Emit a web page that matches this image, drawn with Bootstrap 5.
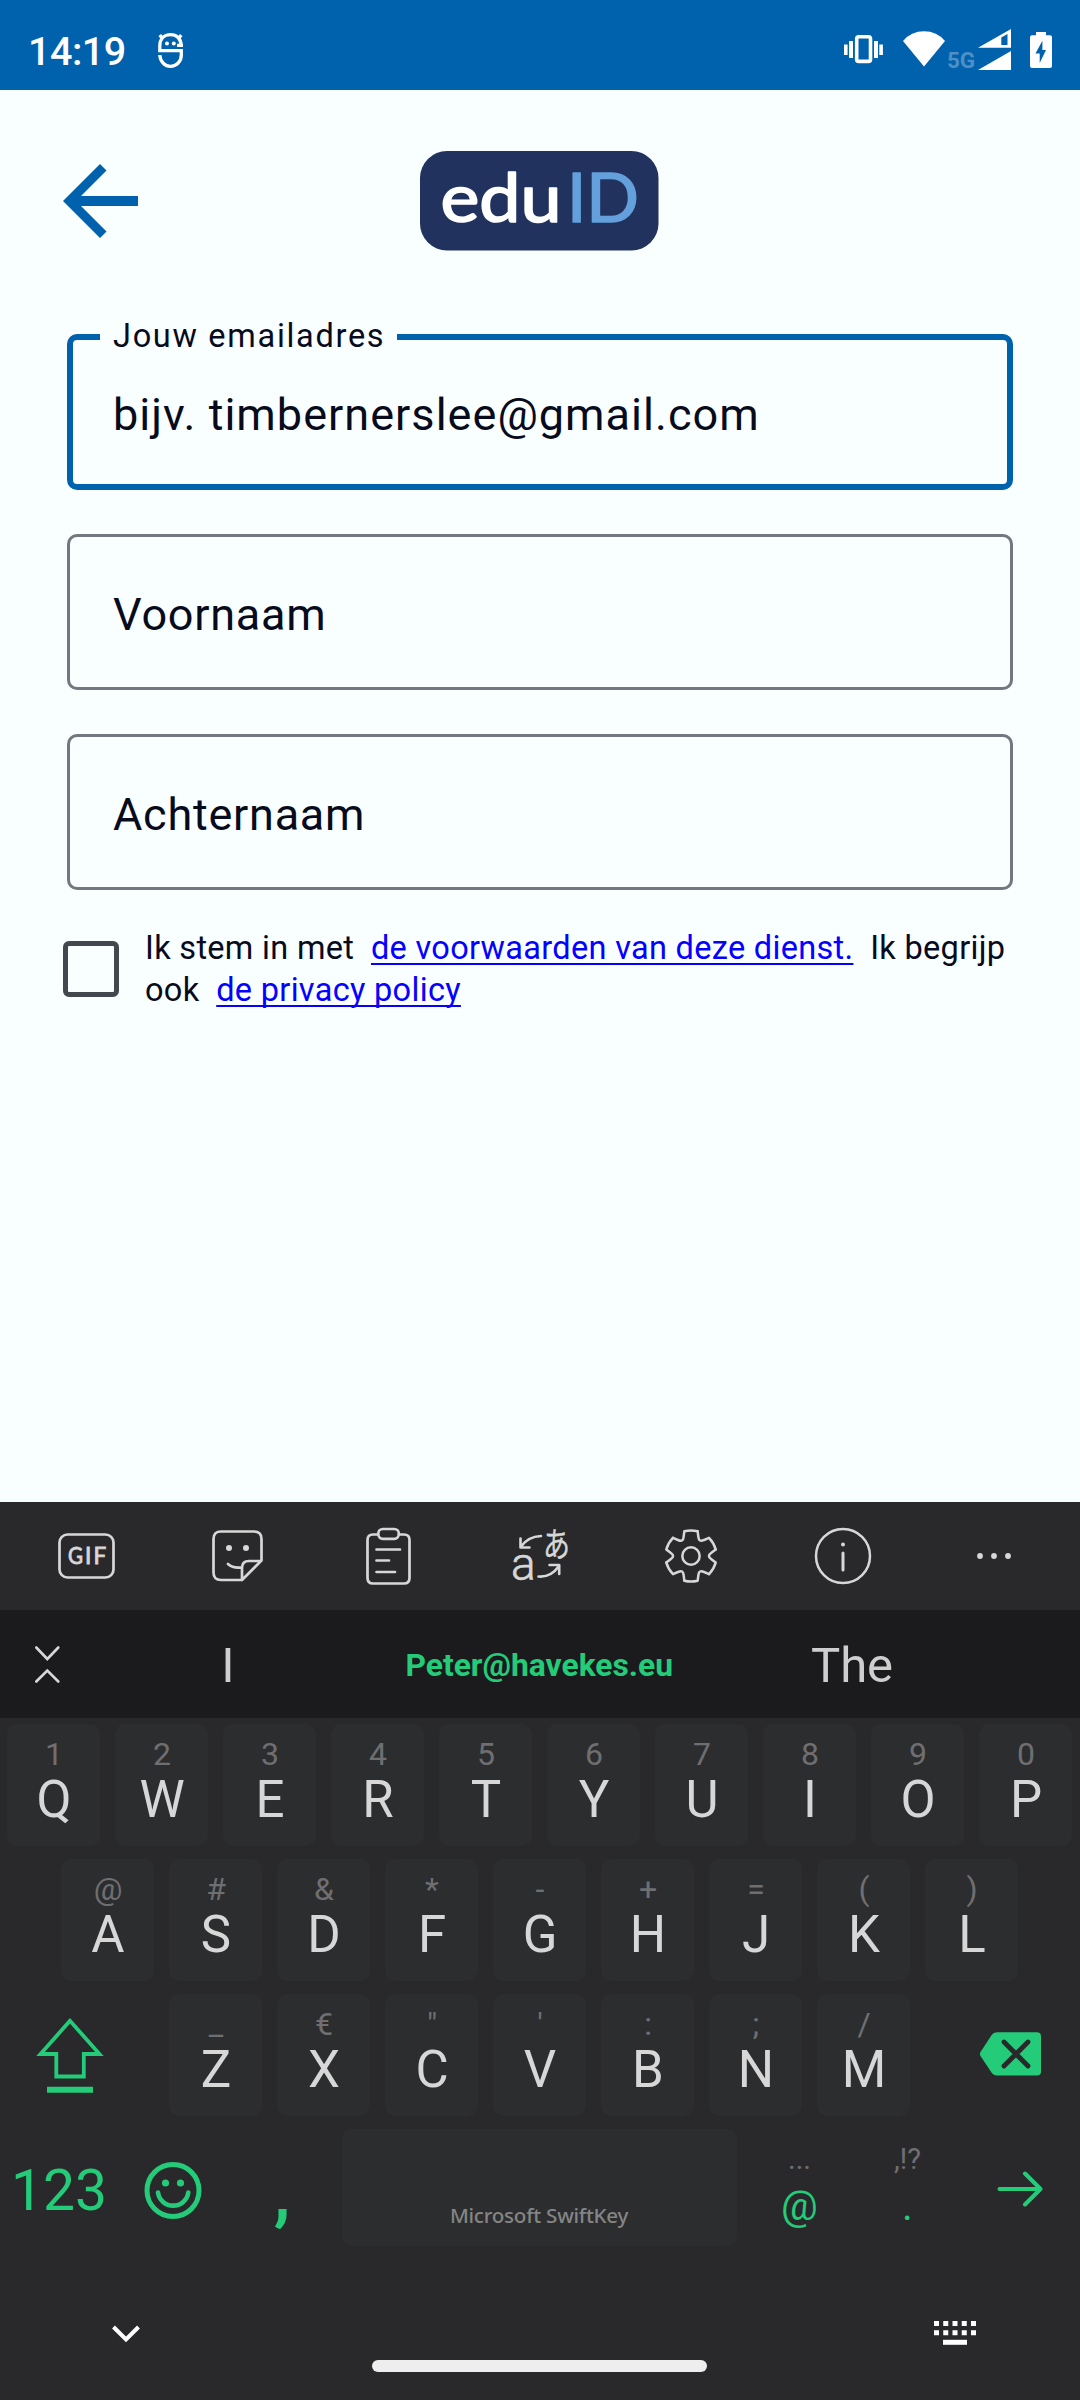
<!DOCTYPE html>
<html lang="nl">
<head>
<meta charset="utf-8">
<meta name="viewport" content="width=device-width, initial-scale=1">
<title>eduID</title>
<link href="https://cdn.jsdelivr.net/npm/bootstrap@5.3.0/dist/css/bootstrap.min.css" rel="stylesheet">
<style>
  body { width: 1080px; height: 2400px; overflow: hidden; background: #f9feff; color: #070b1c; font-family: Roboto, "Liberation Sans", sans-serif; }
  svg { display: block; overflow: visible; flex: none; }
  .statusbar { height: 90px; background: #0061ad; padding: 9px 28px 0 28px; color: #fff; }
  .clock { font-size: 39.5px; font-weight: 500; line-height: 86px; letter-spacing: -.5px; width: 130px; }
  .topbar { height: 200px; padding: 61px 63px 0; }
  .page-form { height: 1212px; padding: 44px 67px 0; }
  .outlined { height: 156px; margin-bottom: 44px; }
  .outlined .form-control { height: 156px; border: 3px solid #74777f; border-radius: 10px; background: transparent; color: #070b1c; font-size: 45px; letter-spacing: .75px; padding: 5px 43px 0; box-shadow: none; }
  .outlined .form-control::placeholder { color: #070b1c; opacity: 1; }
  .outlined.active-field .form-control { border: 6px solid #0061ad; padding: 5px 40px 0; letter-spacing: 1.03px; }
  .outlined label { left: 33px; top: -18px; height: 40px; line-height: 40px; padding: 0 12px 0 13px; width: 297px; background: #f9feff; font-size: 32.5px; letter-spacing: 1.7px; white-space: nowrap; }
  .terms { margin: -7px 0 0 -4px; font-size: 32.5px; line-height: 42px; letter-spacing: .31px; }
  .terms .form-check-input { width: 56px; height: 56px; margin: 14px 26px 0 0; border: 5px solid #44474e; border-radius: 6px; background: transparent; flex: none; }
  .terms a { color: #0500ff; text-decoration-thickness: 2px; text-underline-offset: 4px; text-decoration-skip-ink: none; }
  .keyboard { height: 898px; background: #29292b; color: #d7d7d7; }
  .tools { height: 108px; padding: 0 10.5px; }
  .predictions { height: 108px; background: #1b1b1d; padding-right: 72px; }
  .predictions .toggle-cell { width: 72px; padding-left: 35px; }
  .guess { font-size: 49px; line-height: 105px; padding-top: 3px; width: 312px; color: #cecece; }
  .guess-main { font-size: 31.8px; font-weight: 700; padding: 3px 1.5px 0 0; color: #24cb79; width: 312px; }
  .keyrow { height: 135px; padding-top: 6px; }
  .keycell { width: 108px; padding: 0 8px 0 7px; }
  .keycap { height: 122px; border-radius: 10px; background: #2c2d2f; padding: 14px 0 0 1px; }
  .hint { font-size: 32px; line-height: 32px; height: 32px; color: #6f6f71; }
  .letter { font-size: 51px; line-height: 51px; margin-top: 4px; }
  .side { width: 162px; }
  .green { color: #24cb79; }
  .lastrow { height: 124px; padding-top: 6px; }
  .num { width: 118px; font-size: 57px; line-height: 124px; margin-right: 1px; }
  .comma-key { width: 108px; font-size: 68px; font-weight: 700; line-height: 68px; padding: 31px 0 0 2px; }
  .space-key { width: 395px; height: 117px; margin: 0 8px 0 7px; border-radius: 10px; background: #2c2d2f; font-family: "Noto Sans", "Open Sans", sans-serif; font-weight: 500; font-size: 20.6px; letter-spacing: -.25px; line-height: 30px; color: #858585; padding: 0 1px 16px 0; }
  .punct { width: 108px; padding: 12px 0 0 1px; }
  .punct .hint { font-size: 29px; height: 36px; line-height: 36px; }
  .punct .sign { font-size: 41px; line-height: 48px; margin-top: 5px; }
  .navarea { height: 153px; padding: 74px 104px 0 112px; }
  .homebar { width: 335px; height: 12px; border-radius: 6px; background: #eee; margin: 39px 0 0 232px; }
</style>
</head>
<body>
<header class="statusbar d-flex justify-content-between">
  <div class="d-flex">
    <span class="clock">14:19</span>
    <svg class="mt-3" width="26" height="38" viewBox="158 25 26 38" fill="none" stroke="#fff" stroke-width="3.3">
      <path d="M181.3 45C180.3 38 176 34.7 170.5 34.7C164 34.7 159.8 39 159.8 46V50.6H181.3V55C181.3 62 176 66.3 170.5 66.3C165 66.3 160.2 62 159.8 55M177 45.3H183M162 38L159.8 35M179 38L181.2 35"/>
      <g fill="#fff" stroke="none"><circle cx="167" cy="43.4" r="2"/><circle cx="173.8" cy="43.4" r="2"/></g>
    </svg>
  </div>
  <svg width="208" height="70" viewBox="844 9 208 70" fill="#fff">
    <rect x="856.7" y="36.8" width="13.8" height="24.6" rx="2" fill="none" stroke="#fff" stroke-width="3.6"/>
    <path d="M849 41h4v17h-4zM844 44.500h3.600v10.500h-3.600zM874 41h4v17h-4zM879.300 44.500h3.600v10.500h-3.600z"/>
    <path d="M903 41Q911 31.300 924 31.300T945 41L924 66.500Z"/>
    <text x="947" y="68" font-size="22.500" font-weight="700" fill="#4d90c6" textLength="28">5G</text>
    <path fill-rule="evenodd" d="M978 47.700L1011 29V47.700ZM1001.300 37.500L1007.500 34V45H1001.300ZM978 70L1011 51V70Z"/>
    <path fill-rule="evenodd" d="M1036 32h10v3.300h4q2 0 2 2v28.700q0 2-2 2h-18q-2 0-2-2V37.300q0-2 2-2h4zM1042.400 40.700L1035.500 53.500H1039.700V63L1046 50H1042.400Z"/>
  </svg>
</header>

<div class="topbar d-flex">
  <svg width="357" height="100" viewBox="63 151 357 100" fill="#0061ad"><path d="M63 201L100 164L106.500 170.500L81 196H138V206H81L106.500 231.500L100 238Z"/></svg>
  <svg width="239" height="100" viewBox="0 0 239 100" font-family="Lato">
    <rect width="238.500" height="99.500" rx="27" fill="#22325f"/>
    <g font-size="67" font-weight="400" stroke-linejoin="round" stroke-width="1.700">
      <text x="20.500" y="70.500" fill="#fff" stroke="#fff" textLength="121" lengthAdjust="spacingAndGlyphs">edu</text>
      <text x="147" y="70.500" fill="#63a0dc" stroke="#63a0dc" textLength="72" lengthAdjust="spacingAndGlyphs">ID</text>
    </g>
  </svg>
</div>

<main class="page-form">
  <div class="outlined active-field position-relative">
    <input id="email" class="form-control" type="text" placeholder="bijv. timbernerslee@gmail.com">
    <label for="email" class="position-absolute">Jouw emailadres</label>
  </div>
  <div class="outlined"><input class="form-control" type="text" placeholder="Voornaam"></div>
  <div class="outlined"><input class="form-control" type="text" placeholder="Achternaam"></div>
  <div class="terms d-flex">
    <input class="form-check-input" type="checkbox">
    <div class="text-nowrap">Ik stem in met&nbsp; <a href="#">de voorwaarden van deze dienst.</a>&nbsp; Ik begrijp<br>ook&nbsp; <a href="#">de privacy policy</a></div>
  </div>
</main>

<section class="keyboard">
  <div class="tools d-flex align-items-center">
    <div class="col d-flex justify-content-center">
      <svg width="57" height="46" viewBox="0 0 57 46" fill="none" stroke="#d7d7d7" stroke-width="2.700"><rect x="1.500" y="1.500" width="54" height="43" rx="8"/><text x="10" y="31" font-family="Lato" font-size="22.500" fill="#d7d7d7" stroke-width=".9"><tspan textLength="15" lengthAdjust="spacingAndGlyphs">G</tspan><tspan x="27">I</tspan><tspan x="35.500">F</tspan></text></svg>
    </div>
    <div class="col d-flex justify-content-center">
      <svg width="51" height="52" viewBox="0 0 51 52" fill="none" stroke="#d7d7d7" stroke-width="2.700" stroke-linejoin="round" stroke-linecap="round"><path d="M30 50H9Q1.500 50 1.500 42.500V9Q1.500 1.500 9 1.500H42Q49.500 1.500 49.500 9V30.500L30 50V38Q30 31 37 31H49M16 34Q21 38.500 29 37.500"/><g fill="#d7d7d7" stroke="none"><circle cx="17" cy="18" r="3"/><circle cx="34" cy="18" r="3"/></g></svg>
    </div>
    <div class="col d-flex justify-content-center">
      <svg width="45" height="58" viewBox="0 0 45 58" fill="none" stroke="#d7d7d7" stroke-width="2.700" stroke-linecap="round"><path d="M12 7.500H7Q1.500 7.500 1.500 13V51Q1.500 56.500 7 56.500H38Q43.500 56.500 43.500 51V13Q43.500 7.500 38 7.500H33M10.500 22.500H34M10.500 33.500H23M10.500 45H29"/><rect x="12.300" y="2" width="20.500" height="9.800" rx="4.500"/></svg>
    </div>
    <div class="col d-flex justify-content-center">
      <svg width="56" height="56" viewBox="513 1528 56 56" fill="none" stroke="#d7d7d7" stroke-width="2.600" stroke-linecap="round" stroke-linejoin="round">
        <path d="M542 1536Q529 1536.500 521.500 1547M521.500 1538.500V1547.500H530.500M539.500 1576.500Q552 1577.500 560 1566M550.500 1565H560.200V1574"/>
        <text x="512" y="1580.300" font-family="Roboto" font-weight="300" font-size="46" fill="#d7d7d7" stroke-width=".6">a</text>
        <text transform="translate(544 1557) scale(.9 1.150)" font-family="'Noto Sans CJK JP'" font-size="30" fill="#d7d7d7" stroke-width=".3">あ</text>
      </svg>
    </div>
    <div class="col d-flex justify-content-center">
      <svg width="52" height="54" viewBox="-78 -81 156 162" fill="none" stroke="#d7d7d7" stroke-width="7.500" stroke-linejoin="round" stroke-linecap="round">
        <defs><path id="tooth" d="M20-74Q0-79-20-74L-22-58C-23-46-28.300-42.900-39.200-48L-54.100-54.300"/></defs>
        <use href="#tooth"/><use href="#tooth" transform="rotate(60)"/><use href="#tooth" transform="rotate(120)"/><use href="#tooth" transform="rotate(180)"/><use href="#tooth" transform="rotate(240)"/><use href="#tooth" transform="rotate(300)"/>
        <circle r="26"/>
      </svg>
    </div>
    <div class="col d-flex justify-content-center">
      <svg width="58" height="58" viewBox="0 0 58 58" fill="none" stroke="#d7d7d7" stroke-width="2.500" stroke-linecap="round"><circle cx="29" cy="29" r="27"/><path d="M29 26V43" stroke-width="3"/><circle cx="29" cy="17.500" r="2" fill="#d7d7d7" stroke="none"/></svg>
    </div>
    <div class="col d-flex justify-content-center">
      <svg width="34" height="6" viewBox="0 0 34 6" fill="#d7d7d7"><circle cx="3" cy="3" r="2.900"/><circle cx="17" cy="3" r="2.900"/><circle cx="31" cy="3" r="2.900"/></svg>
    </div>
  </div>

  <div class="predictions d-flex align-items-center text-center">
    <div class="toggle-cell"><svg width="25" height="37" viewBox="0 0 25 37" fill="none" stroke="#d7d7d7" stroke-width="2.600" stroke-linecap="round"><path d="M1.300 1.500L12.300 13L23.300 1.500M1.300 35.500L12.300 24.500L23.300 35.500"/></svg></div>
    <div class="guess">I</div>
    <div class="guess-main">Peter@havekes.eu</div>
    <div class="guess">The</div>
  </div>

  <div id="row1" class="keyrow d-flex text-center"></div>
  <div id="row2" class="keyrow d-flex justify-content-center text-center"></div>
  <div class="keyrow d-flex text-center">
    <div class="side"><svg width="108" height="122" viewBox="0 1994 108 122" fill="none" stroke="#24cb79" stroke-width="3.800"><path d="M70 2020.800L40.500 2054H56.300V2076.500H83.800V2054H99.500Z"/><path d="M47 2089.700H93" stroke-width="6"/></svg></div>
    <div id="row3" class="d-flex"></div>
    <div class="side"><svg width="162" height="122" viewBox="918 1994 162 122"><path fill="#24cb79" d="M997 2032.300H1037Q1041 2032.300 1041 2036.300V2071.500Q1041 2075.500 1037 2075.500H997Q993.500 2075.500 991.500 2072.500L980.500 2056Q979.300 2054 980.500 2052L991.500 2035.300Q993.500 2032.300 997 2032.300Z"/><path d="M1004 2042L1028 2066M1028 2042L1004 2066" stroke="#29292b" stroke-width="4.800" stroke-linecap="round"/></svg></div>
  </div>
  <div class="lastrow d-flex text-center green">
    <div class="num">123</div>
    <svg width="108" height="118" viewBox="119 2129 108 118" fill="none" stroke="#24cb79" stroke-width="5" stroke-linecap="round"><circle cx="173" cy="2190.500" r="26"/><path d="M158 2192.500A15.300 15.300 0 0 0 188.300 2192.500" stroke-width="4.600"/><g fill="#24cb79" stroke="none"><circle cx="165.500" cy="2183" r="3.600"/><circle cx="180.500" cy="2183" r="3.600"/></g></svg>
    <div class="comma-key">,</div>
    <div class="space-key d-flex align-items-end justify-content-center">Microsoft SwiftKey</div>
    <div class="punct"><div class="hint">...</div><div class="sign">@</div></div>
    <div class="punct"><div class="hint">,!?</div><div class="sign">.</div></div>
    <svg width="119" height="118" viewBox="961 2129 119 118" fill="none" stroke="#24cb79" stroke-width="4" stroke-linecap="round" stroke-linejoin="round"><path d="M999.500 2189H1040.500M1025 2173.500L1040.500 2189L1025 2204.500"/></svg>
  </div>
  <div class="navarea d-flex align-items-start">
    <svg width="28" height="26" viewBox="0 0 28 26" fill="none" stroke="#fff" stroke-width="4"><path d="M1.500 6L14 18.500L26.500 6"/></svg>
    <div class="homebar"></div>
    <svg class="ms-auto" width="42" height="24" viewBox="0 0 42 24" fill="none" stroke="#fff" stroke-width="5"><path d="M0 2.500H42M0 11.800H42" stroke-dasharray="5 4.250"/><path d="M9 21.300H33"/></svg>
  </div>
</section>

<script src="https://cdn.jsdelivr.net/npm/bootstrap@5.3.0/dist/js/bootstrap.bundle.min.js"></script>
<script>
  const rows = {
    row1: ['QWERTYUIOP', '1234567890'],
    row2: ['ASDFGHJKL', '@#&*-+=()'],
    row3: ['ZXCVBNM', '_€"\':;/']
  };
  for (const [id, [letters, hints]] of Object.entries(rows)) {
    const row = document.getElementById(id);
    [...letters].forEach((letter, i) => {
      const cell = document.createElement('div');
      cell.className = 'keycell';
      cell.innerHTML = '<div class="keycap"><div class="hint"></div><div class="letter"></div></div>';
      cell.querySelector('.hint').textContent = hints[i];
      cell.querySelector('.letter').textContent = letter;
      row.append(cell);
    });
  }
</script>
</body>
</html>
